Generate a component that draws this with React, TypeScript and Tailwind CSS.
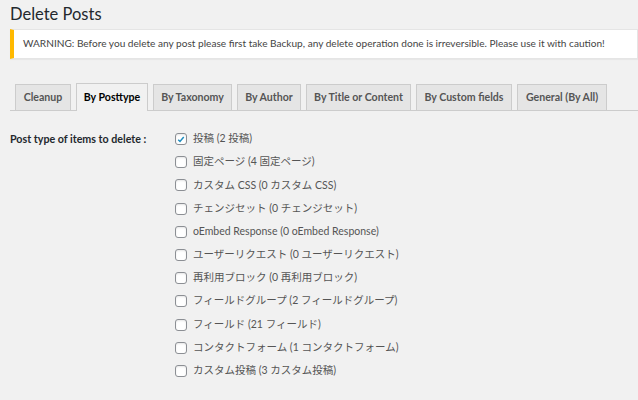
import { useState } from 'react';

const tabs = [
  { name: 'Cleanup', w: 'w-[56px]' },
  { name: 'By Posttype', w: 'w-[72px]' },
  { name: 'By Taxonomy', w: 'w-[79px]' },
  { name: 'By Author', w: 'w-[64px]' },
  { name: 'By Title or Content', w: 'w-[105px]' },
  { name: 'By Custom fields', w: 'w-[96px]' },
  { name: 'General (By All)', w: 'w-[90px]' },
];

const postTypes = [
  '投稿 (2 投稿)',
  '固定ページ (4 固定ページ)',
  'カスタム CSS (0 カスタム CSS)',
  'チェンジセット (0 チェンジセット)',
  'oEmbed Response (0 oEmbed Response)',
  'ユーザーリクエスト (0 ユーザーリクエスト)',
  '再利用ブロック (0 再利用ブロック)',
  'フィールドグループ (2 フィールドグループ)',
  'フィールド (21 フィールド)',
  'コンタクトフォーム (1 コンタクトフォーム)',
  'カスタム投稿 (3 カスタム投稿)',
];

function Checkbox({ checked, onChange }: { checked: boolean; onChange: () => void }) {
  return (
    <button
      type="button"
      onClick={onChange}
      className="flex h-[12px] w-[12px] shrink-0 items-center justify-center rounded-[3px] border border-[#8c8f94] bg-white shadow-[inset_0_1px_2px_rgba(0,0,0,0.1)]"
    >
      {checked && (
        <svg viewBox="0 0 20 20" className="h-[13px] w-[13px]">
          <path d="M4.5 10.5l3.5 3.5 7.5-9" fill="none" stroke="#1e8cbe" strokeWidth="3" />
        </svg>
      )}
    </button>
  );
}

export default function App() {
  const [active, setActive] = useState('By Posttype');
  const [checked, setChecked] = useState<string[]>([postTypes[0]]);

  const toggle = (t: string) =>
    setChecked((c) => (c.includes(t) ? c.filter((x) => x !== t) : [...c, t]));

  return (
    <div
      className="h-[400px] w-full overflow-hidden bg-[#f1f1f1] pl-[10px] text-[#444]"
      style={{ fontFamily: 'Lato, "Noto Sans CJK JP", sans-serif' }}
    >
      <h1 className="pt-[2px] text-[16.5px] leading-[24px] font-normal text-[#23282d]">Delete Posts</h1>

      <div className="mt-[3px] flex h-[30px] items-center border border-l-4 border-[#e5e5e5] border-l-[#ffb900] bg-white pl-[9px] text-[10.1px] whitespace-nowrap text-[#444] shadow-[0_1px_1px_rgba(0,0,0,0.04)]">
        WARNING: Before you delete any post please first take Backup, any delete operation done is irreversible. Please use it with caution!
      </div>

      <div className="mt-[25px] flex h-[27px] items-end gap-[5px] border-b border-[#ccc] pl-[5px]">
        {tabs.map((t) =>
          t.name === active ? (
            <button
              key={t.name}
              onClick={() => setActive(t.name)}
              className={`${t.w} -mb-px flex h-[28px] items-center justify-center border border-b-0 border-[#ccc] bg-[#f1f1f1] text-[10.6px] font-bold whitespace-nowrap text-[#000]`}
            >
              {t.name}
            </button>
          ) : (
            <button
              key={t.name}
              onClick={() => setActive(t.name)}
              className={`${t.w} flex h-[26px] items-center justify-center border border-b-0 border-[#ccc] bg-[#e5e5e5] text-[10.6px] font-bold whitespace-nowrap text-[#555]`}
            >
              {t.name}
            </button>
          )
        )}
      </div>

      <div className="mt-[21px] flex">
        <div className="w-[165px] text-[10.7px] leading-[14px] font-bold text-[#23282d]">
          Post type of items to delete :
        </div>
        <div className="flex flex-col gap-[9.2px]">
          {postTypes.map((t) => (
            <label key={t} className="flex h-[14px] cursor-pointer items-center gap-[6px] text-[10.5px] text-[#555]">
              <Checkbox checked={checked.includes(t)} onChange={() => toggle(t)} />
              <span className="whitespace-nowrap">{t}</span>
            </label>
          ))}
        </div>
      </div>
    </div>
  );
}
